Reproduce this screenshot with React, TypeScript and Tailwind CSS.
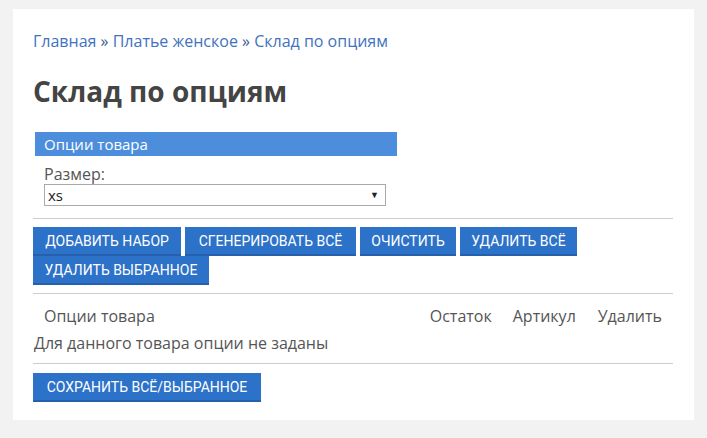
const buttons: [string, number][] = [
  ["Добавить набор", 148],
  ["Сгенерировать всё", 171],
  ["Очистить", 96],
  ["Удалить всё", 117],
  ["Удалить выбранное", 176],
];

function Btn({ label, width }: { label: string; width: number }) {
  return (
    <button
      className="h-[29px] bg-[#2c72c9] border-b-2 border-[#2660ad] text-[14px] uppercase text-white font-['Roboto',sans-serif] leading-none"
      style={{ width }}
    >
      {label}
    </button>
  );
}

export default function App() {
  return (
    <div className="min-h-[438px] bg-[#f2f2f2] pt-[9px] pl-[13px] font-['Open_Sans',sans-serif] text-[#555]">
      <div className="w-[681px] h-[411px] bg-white px-[20px] pt-[20px]">
        {/* breadcrumbs */}
        <div className="text-[16px] leading-[24px] text-[#3f72c0]">
          <span>Главная</span>
          <span className="text-[#3a5a8e]"> » </span>
          <span>Платье женское</span>
          <span className="text-[#3a5a8e]"> » </span>
          <span>Склад по опциям</span>
        </div>
        <h1 className="mt-[21px] text-[28px] leading-[34px] font-bold text-[#444]">Склад по опциям</h1>

        <div className="mt-[24px] ml-[2px] w-[362px] h-[24px] bg-[#4d8edc] pl-[9px] text-[15px] leading-[24px] text-white">
          Опции товара
        </div>
        <div className="pl-[11px] pt-[8px]">
          <div className="text-[16px] leading-[20px]">Размер:</div>
          <div className="flex h-[22px] w-[342px] items-center justify-between border border-[#aaa] pl-[3px] pr-[6px] text-[15px] text-[#222]">
            <span>xs</span>
            <span className="text-[9px] text-[#222]">▼</span>
          </div>
        </div>

        <div className="mt-[12px] h-px w-[640px] bg-[#ccc]" />
        <div className="mt-[8px] flex w-[560px] flex-wrap gap-x-[4px]">
          {buttons.map(([b, w]) => (
            <Btn key={b} label={b} width={w} />
          ))}
        </div>
        <div className="mt-[8px] h-px w-[640px] bg-[#ccc]" />

        <div className="mt-[11px] flex w-[640px] text-[16px] leading-[22px]">
          <div className="flex-1 pl-[11px]">Опции товара</div>
          <div className="w-[83px]">Остаток</div>
          <div className="w-[85px]">Артикул</div>
          <div className="pr-[11px]">Удалить</div>
        </div>
        <div className="mt-[5px] pl-[1px] text-[16px] leading-[22px]">Для данного товара опции не заданы</div>
        <div className="mt-[9px] h-px w-[640px] bg-[#ccc]" />
        <div className="mt-[9px]">
          <Btn label="Сохранить всё/выбранное" width={228} />
        </div>
      </div>
    </div>
  );
}
